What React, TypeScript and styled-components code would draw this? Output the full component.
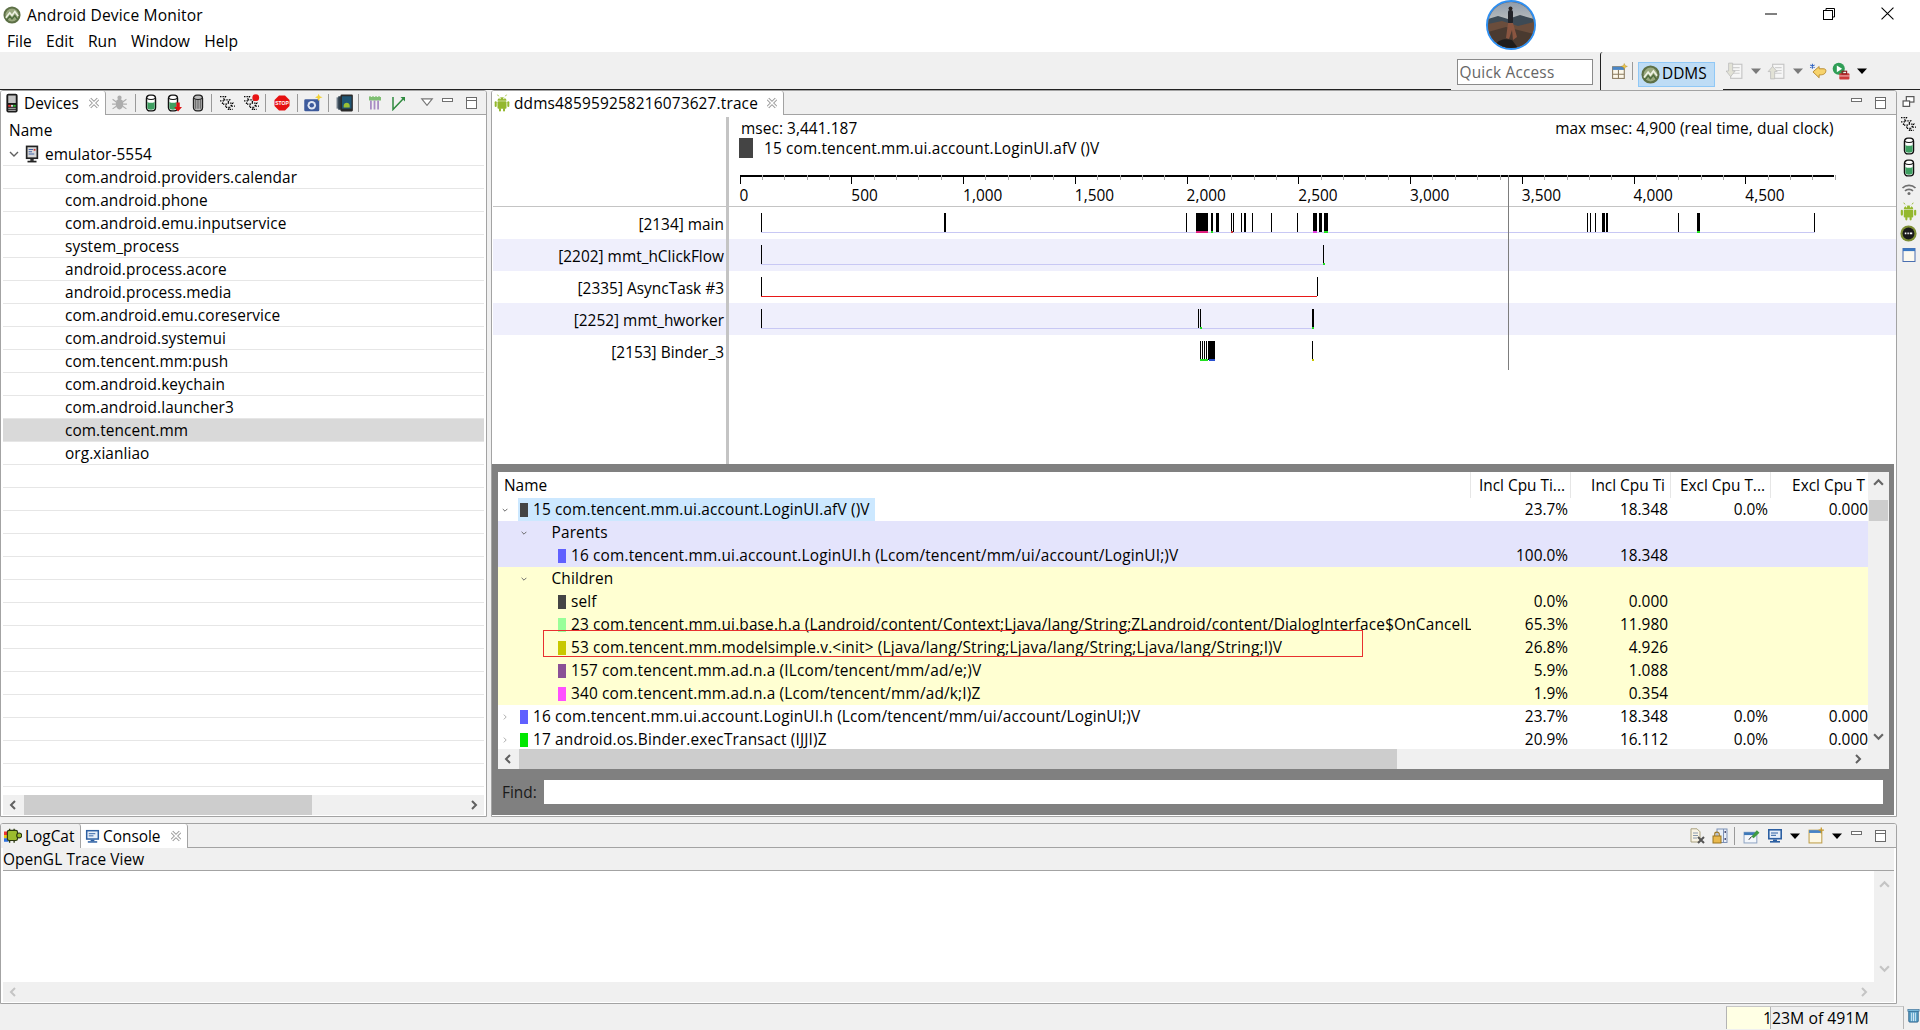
import React from "react";
import styled, { createGlobalStyle } from "styled-components";

const Global = createGlobalStyle`
  html, body { margin: 0; padding: 0; background: #f0f0f0; }
  #root { width: 1920px; height: 1030px; overflow: hidden; }
  * { box-sizing: border-box; }
`;

const FONT = `"Open Sans", "Noto Sans", "Liberation Sans", sans-serif`;
const BORDER = "#a3a3a3";

const Page = styled.div`
  width: 1920px; height: 1030px; display: flex; flex-direction: column;
  background: #f0f0f0; color: #000; font: 15.4px/23px ${FONT};
`;

/* ---- title bar ---- */
const TitleBar = styled.header`display: flex; height: 52px; background: #fff; flex: none;`;
const TitleLeft = styled.div`flex: 1; display: flex; flex-direction: column;`;
const TitleRow = styled.div`display: flex; align-items: center; height: 30px; padding-left: 3px; gap: 6px; font-size: 15.6px; letter-spacing: 0.15px;`;
const MenuBar = styled.nav`display: flex; gap: 14.3px; padding-left: 7px; font-size: 15.6px; height: 22px; line-height: 22px;`;
const MenuItem = styled.span``;
const Avatar = styled.div`width: 50px; height: 50px; border-radius: 50%; border: 2px solid #2f8ff0; overflow: hidden; flex: none; background: #445;`;
const WindowControls = styled.div`width: 384px; display: flex; justify-content: flex-end; padding: 0 3px 0 0; flex: none;`;
const WinButton = styled.div`width: 58.5px; height: 27px; display: flex; align-items: center; justify-content: center;`;

/* ---- toolbar ---- */
const Toolbar = styled.div`display: flex; height: 38px; flex: none;`;
const ToolbarFill = styled.div`flex: 1; border-bottom: 1px solid #222;`;
const QuickZone = styled.div`width: 149px; padding: 7px 0 0 5.5px;`;
const QuickBox = styled.div`width: 136px; height: 26px; border: 1px solid #8a8a8a; background: #fff; color: #666; padding-left: 2px; line-height: 25px; letter-spacing: 0.2px;`;
const PerspectiveZone = styled.div`width: 123px; border-left: 1px solid #222; border-top-left-radius: 3px; display: flex; align-items: center;`;
const TrailZone = styled.div`width: 197px; border-bottom: 1px solid #222; display: flex; align-items: center;`;
const DdmsButton = styled.div`
  width: 77px; height: 25px; margin: 6px 8px 0 0; background: #bedcf5; border: 1px solid #90c8f6;
  display: flex; align-items: center; padding-left: 2px; gap: 2px; flex: none; line-height: 24px;
`;

/* ---- generic strip ---- */
const StripRow = styled.div`display: flex; align-items: center; flex: 1; height: 100%;`;
const Tool = styled.div<{ $w: number; $ml: number }>`
  width: ${p => p.$w}px; margin-left: ${p => p.$ml}px; display: flex; align-items: center; justify-content: center; flex: none;
`;
const Sep = styled.div`width: 1px; height: 18px; background: #9a9a9a;`;

type Item = { c: number; w?: number; node: React.ReactNode };
const Strip = ({ origin, items }: { origin: number; items: Item[] }) => {
  let end = origin;
  return (
    <StripRow>
      {items.map((it, i) => {
        const w = it.w ?? 20;
        const ml = it.c - w / 2 - end;
        end = it.c + w / 2;
        return <Tool key={i} $w={w} $ml={ml}>{it.node}</Tool>;
      })}
    </StripRow>
  );
};

/* ---- workbench ---- */
const MainRow = styled.div`display: flex; height: 733px; flex: none; padding-bottom: 6px;`;
const Panel = styled.section`
  border: 1px solid ${BORDER}; border-top-left-radius: 3px; border-top-right-radius: 3px;
  background: #fff; display: flex; flex-direction: column; overflow: hidden; flex: none;
`;
const LeftPanel = styled(Panel)`width: 487px; margin-right: 4px;`;
const RightPanel = styled(Panel)`width: 1406px;`;
const TabStrip = styled.div`display: flex; height: 24px; background: #f0f0f0; border-bottom: 1px solid ${BORDER}; flex: none; align-items: stretch;`;
const Tab = styled.div<{ $w: number; $active?: boolean; $icon?: number; $gap?: number; $ls?: number }>`
  width: ${p => p.$w}px; flex: none; display: flex; align-items: center; margin-bottom: -1px;
  background: ${p => (p.$active ? "#fff" : "#f0f0f0")};
  border-right: 1px solid ${BORDER};
  border-top-right-radius: 3px;
  padding-left: ${p => p.$icon ?? 2}px; gap: ${p => p.$gap ?? 3}px; line-height: 23px; height: 24px;
  letter-spacing: ${p => p.$ls ?? 0}px;
`;
const TabClose = styled.span`margin-left: auto; margin-right: 5px; display: flex;`;

/* ---- device tree ---- */
const Tree = styled.div`flex: 1; padding: 0 2px; display: flex; flex-direction: column; overflow: hidden; letter-spacing: 0.08px;`;
const TreeHeader = styled.div`height: 28px; padding: 4px 0 0 6px; flex: none;`;
const TreeRow = styled.div<{ $sel?: boolean; $indent: number; $gap?: number }>`
  height: 23px; flex: none; border-bottom: 1px solid #e6e6e6; padding-left: ${p => p.$indent}px;
  background: ${p => (p.$sel ? "#d9d9d9" : "#fff")}; display: flex; align-items: center; gap: ${p => p.$gap ?? 0}px; white-space: nowrap;
`;
const Scroll = styled.div<{ $m?: string }>`
  height: 20px; background: #f0f0f0; flex: none; display: flex; align-items: center; justify-content: space-between;
  margin: ${p => p.$m ?? "0"}; position: relative;
`;
const Thumb = styled.div<{ $l: number; $w: number }>`
  position: absolute; top: 0; bottom: 0; left: ${p => p.$l}px; width: ${p => p.$w}px; background: #cdcdcd;
`;
const ScrollArrow = styled.span<{ $mr?: number }>`width: 20px; display: flex; align-items: center; justify-content: center; position: relative; margin-right: ${p => p.$mr ?? 0}px;`;

/* ---- trace view ---- */
const TracePane = styled.div`height: 349px; position: relative; flex: none; display: flex; flex-direction: column;`;
const TraceHead = styled.div`height: 92px; display: grid; grid-template-columns: 236px 1fr; border-bottom: 1px solid #c4c4c4; flex: none; margin-left: 1px;`;
const LabelCol = styled.div<{ $mt?: number }>`border-right: 3px solid #c4c4c4; margin-top: ${p => p.$mt ?? 0}px;`;
const HeadInfo = styled.div`display: flex; flex-direction: column; padding-top: 3px;`;
const MsecRow = styled.div`display: flex; justify-content: space-between; height: 20px; line-height: 22px; padding: 0 62.5px 0 12px; flex: none; letter-spacing: 0.07px;`;
const SelRow = styled.div`display: flex; align-items: flex-start; height: 20px; padding-left: 10px; gap: 11px; line-height: 22px; flex: none; letter-spacing: 0.13px;`;
const SelSwatch = styled.span`width: 14px; height: 20px; background: #444; flex: none;`;
const ThreadRow = styled.div<{ $alt?: boolean }>`
  height: 32px; display: grid; grid-template-columns: 236px 1165px; margin-left: 1px; flex: none;
  background: ${p => (p.$alt ? "#efeffc" : "#fff")};
`;
const ThreadLabel = styled.div`border-right: 3px solid #c4c4c4; text-align: right; padding-right: 2px; line-height: 35px; white-space: nowrap; letter-spacing: 0.02px;`;
const TraceFill = styled.div`flex: 1; margin-left: 1px; display: grid; grid-template-columns: 236px 1fr;`;
const Cursor = styled.div`position: absolute; left: 1016px; top: 60px; height: 195px; width: 1px; background: #7d7d7d;`;

/* ---- call table ---- */
const GrayFrame = styled.div`
  height: 351px; background: #808080; margin: 0 2px 0 0; padding: 8px 5px 0 6px; flex: none;
`;
const TableBox = styled.div`display: flex; height: 297px; background: #fff; position: relative;`;
const TableMain = styled.div`width: 1370px; display: flex; flex-direction: column; flex: none;`;
const cols = "973px 100px 100px 100px 97px";
const HeadRow = styled.div`display: grid; grid-template-columns: ${cols}; height: 26px; flex: none; line-height: 27px;`;
const HeadCell = styled.div<{ $left?: boolean }>`
  text-align: ${p => (p.$left ? "left" : "right")}; padding: ${p => (p.$left ? "0 0 0 6px" : "0 5px 0 0")};
  border-right: 1px solid #e6e6e6; white-space: nowrap; overflow: hidden; height: 26px;
  &:last-child { border-right: 0; padding-right: 3px; }
`;
const Body = styled.div`height: 251px; overflow: hidden; flex: none;`;
const Row = styled.div<{ $bg?: string }>`
  display: grid; grid-template-columns: ${cols}; height: 23px; background: ${p => p.$bg ?? "#fff"};
`;
const NameCell = styled.div<{ $pad: number }>`
  display: flex; align-items: center; padding-left: ${p => p.$pad}px; white-space: nowrap; overflow: hidden; height: 23px;
`;
const TreeArrow = styled.span`width: 14px; flex: none; display: flex; justify-content: center; margin-right: 6px;`;
const Label = styled.span<{ $sel?: boolean; $ml?: number }>`
  display: flex; align-items: center; height: 23px; padding: 0 5px 0 2px; margin-left: ${p => p.$ml ?? 0}px;
  background: ${p => (p.$sel ? "#cce8ff" : "transparent")}; flex: none; letter-spacing: 0.16px;
`;
const Swatch = styled.span<{ $c: string }>`width: 8px; height: 14px; background: ${p => p.$c}; margin-right: 5px; flex: none;`;
const Val = styled.div`text-align: right; padding-right: 3px; height: 23px; &:last-child { padding-right: 0; }`;
const VScroll = styled.div`width: 21px; background: #f0f0f0; position: relative; display: flex; flex-direction: column; align-items: center; flex: none;`;
const VThumb = styled.div`position: absolute; left: 1px; width: 19px; top: 28px; height: 21px; background: #cdcdcd;`;
const VArrow = styled.span<{ $top: number }>`position: absolute; top: ${p => p.$top}px; left: 5px; display: flex;`;
const Marker = styled.div`position: absolute; left: 45px; top: 158px; width: 820px; height: 27px; border: 1px solid #e83030; pointer-events: none;`;
const FindRow = styled.div`display: flex; align-items: center; height: 46px; gap: 6px;`;
const FindLabel = styled.span`color: #1a1a1a; width: 40px; padding-left: 4px; flex: none;`;
const FindInput = styled.div`width: 1339px; height: 24px; background: #fff; flex: none;`;

/* ---- right trim ---- */
const Trim = styled.aside`width: 23px; flex: none; display: flex; flex-direction: column; align-items: center; padding-top: 1px;`;
const TrimCell = styled.div`height: 21.9px; display: flex; align-items: center; justify-content: center;`;

/* ---- bottom ---- */
const BottomPanel = styled(Panel)`width: 1897px; height: 181px;`;
const InfoBar = styled.div`height: 23px; background: #f0f0f0; border-bottom: 1px solid ${BORDER}; margin: 0 2px; line-height: 24px; flex: none; letter-spacing: 0.1px;`;
const ConsoleBody = styled.div`flex: 1; display: flex; margin: 0 2px;`;
const ConsoleText = styled.div`flex: 1; background: #fff;`;
const ConsoleV = styled.div`width: 20px; background: #f0f0f0; display: flex; flex-direction: column; align-items: center; justify-content: space-between; padding: 8px 0;`;
const Status = styled.footer`flex: none; height: 26px; display: flex; justify-content: flex-end; padding-top: 2px;`;
const Heap = styled.div`width: 178px; height: 23px; border-left: 1px solid #b4b4b4; border-right: 1px solid #b4b4b4; border-top: 1px solid #c8c8c8; position: relative; margin-right: 2px;`;
const HeapFill = styled.div`position: absolute; left: 0; top: 0; bottom: 0; width: 44px; background: #ffffe4; border-right: 1px solid #b4b4b4;`;
const HeapText = styled.span`position: absolute; left: 36px; top: 0; line-height: 22px; font-size: 15.8px; white-space: nowrap;`;
const TrashCell = styled.div`width: 14px; display: flex; justify-content: center; padding-top: 2px;`;

/* ---- icons ---- */
const Svg: React.FC<{ s?: number; children: React.ReactNode; vb?: string }> = ({ s = 20, children, vb = "0 0 16 16" }) => (
  <svg width={s} height={s} viewBox={vb} style={{ display: "block", flex: "none" }}>{children}</svg>
);
const CloseX = () => (
  <Svg s={12} vb="0 0 12 12">
    <path d="M2 2L10 10M10 2L2 10" stroke="#9c9c9c" strokeWidth="3.2" fill="none" />
    <path d="M2 2L10 10M10 2L2 10" stroke="#fff" strokeWidth="1.5" fill="none" />
  </Svg>
);
const Phone = () => (
  <Svg>
    <rect x="3.5" y="0.5" width="9" height="15" rx="1.6" fill="#1c1c1c" />
    <rect x="5" y="2" width="6" height="6" fill="#c4c4c4" />
    <rect x="5" y="9.5" width="2" height="1.5" fill="#e33" /><rect x="7.2" y="9.5" width="1.6" height="1.5" fill="#ddd" /><rect x="9" y="9.5" width="2" height="1.5" fill="#3b3" />
    <rect x="5" y="11.8" width="6" height="1" fill="#999" /><rect x="5" y="13.4" width="6" height="1" fill="#999" />
  </Svg>
);
const Bug = () => (
  <Svg s={17}>
    <ellipse cx="8" cy="9.5" rx="3.6" ry="5" fill="#adadad" />
    <circle cx="8" cy="3.5" r="2" fill="#adadad" />
    <path d="M1.5 5L5 7.5M14.5 5L11 7.5M1 9.5H4.5M15 9.5H11.5M1.5 14L5 11.5M14.5 14L11 11.5" stroke="#adadad" strokeWidth="1.1" fill="none" />
  </Svg>
);
const Cylinder = ({ c = "#3f9f62", dark = "#111" }: { c?: string; dark?: string }) => (
  <>
    <rect x="4" y="1" width="8" height="14" rx="3" fill="#fff" stroke={dark} strokeWidth="1.3" />
    <path d="M4.8 7C6 8 10 8 11.2 7V12.4C11.2 14.4 4.8 14.4 4.8 12.4Z" fill={c} />
    <path d="M4.4 3.8C6 5.2 10 5.2 11.6 3.8" stroke={dark} strokeWidth="0.9" fill="none" />
  </>
);
const Cyl = () => <Svg s={18}><Cylinder /></Svg>;
const CylDown = () => (
  <Svg s={18}>
    <Cylinder />
    <path d="M11 7.5H14V11.5H16L12.5 15.5L9 11.5H11Z" fill="#dd1111" />
  </Svg>
);
const TrashCyl = () => (
  <Svg s={18}>
    <rect x="4" y="1" width="8" height="14" rx="3" fill="#bbb" stroke="#222" strokeWidth="1.2" />
    <path d="M6 5V13M8 5V13M10 5V13" stroke="#555" strokeWidth="0.9" />
    <path d="M4.4 3.8C6 5.2 10 5.2 11.6 3.8" stroke="#222" strokeWidth="0.9" fill="none" />
  </Svg>
);
const Threads = ({ ball }: { ball?: boolean }) => (
  <Svg s={17}>
    <path d="M1 2.5H6L4 5.5H10L8 8.5H13L11 11.5H15" stroke="#000" strokeWidth="1.2" strokeDasharray="1.3 1" fill="none" />
    <path d="M1 6.5H4L3 9.5H7L6 12.5H10L9 14.5H13" stroke="#000" strokeWidth="1.2" strokeDasharray="1.3 1" fill="none" />
    {ball && <circle cx="12" cy="3.5" r="3.2" fill="#e81515" />}
  </Svg>
);
const Stop = () => (
  <Svg s={16}>
    <path d="M5 0.5H11L15.5 5V11L11 15.5H5L0.5 11V5Z" fill="#e61111" />
    <text x="8" y="10" textAnchor="middle" fontSize="5" fontWeight="700" fontFamily="Liberation Sans" fill="#fff" letterSpacing="0">STOP</text>
  </Svg>
);
const Camera = () => (
  <Svg s={20}>
    <rect x="1" y="5" width="12" height="9.5" rx="1" fill="#3d5a9c" />
    <circle cx="7" cy="9.8" r="3.4" fill="#dfe6f3" /><circle cx="7" cy="9.8" r="1.8" fill="#3d5a9c" />
    <path d="M12.5 0.5L13.4 2.6L15.6 3.4L13.4 4.2L12.5 6.5L11.6 4.2L9.6 3.4L11.6 2.6Z" fill="#f2d135" />
  </Svg>
);
const Device = () => (
  <Svg s={18}>
    <rect x="0.5" y="3" width="5" height="10" fill="#6c7a86" /><rect x="2" y="2" width="5" height="12" fill="#2d3e4c" />
    <rect x="4" y="0.5" width="11" height="15" rx="1" fill="#2b2b2b" />
    <rect x="5.3" y="2" width="8.5" height="11" fill="#1f5574" />
    <path d="M6.8 10.5C6.8 7 12.2 7 12.2 10.5V12H6.8Z" fill="#9bc034" />
  </Svg>
);
const Palette = () => (
  <Svg s={16}>
    <rect x="2" y="2" width="12" height="3.5" fill="#7fbf73" />
    <path d="M3 1V5M6 1V5M9 1V5M12 1V5" stroke="#7fbf73" strokeWidth="1.2" />
    <rect x="3" y="5.5" width="1.8" height="9" fill="#a88cc4" /><rect x="6.6" y="5.5" width="1.8" height="9" fill="#a88cc4" /><rect x="10.2" y="5.5" width="1.8" height="9" fill="#a88cc4" />
  </Svg>
);
const LineTool = () => (
  <Svg s={16}>
    <path d="M3 2V14.5L13 4" stroke="#2f8a3f" strokeWidth="1.5" fill="none" />
    <path d="M10.5 2H15V6.5Z" fill="#2f8a3f" />
  </Svg>
);
const ViewMenu = () => (
  <Svg s={14} vb="0 0 12 12"><path d="M1.5 2.5H10.5L6 8Z" fill="#fff" stroke="#777" /></Svg>
);
const MinBtn = () => (
  <Svg s={14} vb="0 0 14 14"><rect x="1.5" y="2.5" width="10" height="3" fill="#fff" stroke="#707070" /></Svg>
);
const MaxBtn = () => (
  <Svg s={14} vb="0 0 14 14"><rect x="2.5" y="1.5" width="10" height="11" fill="#fff" stroke="#6a6a6a" /><path d="M2.5 4.5H12.5" stroke="#6a6a6a" /></Svg>
);
const Android = ({ s = 16 }: { s?: number }) => (
  <Svg s={s}>
    <path d="M4 6C4 1.8 12 1.8 12 6Z" fill="#94b82e" />
    <path d="M5 2L4 0.6M11 2L12 0.6" stroke="#94b82e" strokeWidth="0.8" />
    <rect x="4" y="6.5" width="8" height="6.5" rx="0.8" fill="#94b82e" />
    <rect x="1.5" y="6.5" width="1.8" height="5" rx="0.9" fill="#94b82e" /><rect x="12.7" y="6.5" width="1.8" height="5" rx="0.9" fill="#94b82e" />
    <rect x="5.3" y="12.5" width="1.8" height="3" rx="0.9" fill="#94b82e" /><rect x="8.9" y="12.5" width="1.8" height="3" rx="0.9" fill="#94b82e" />
    <circle cx="6.3" cy="4" r="0.6" fill="#fff" /><circle cx="9.7" cy="4" r="0.6" fill="#fff" />
  </Svg>
);
const Peak = ({ s = 20 }: { s?: number }) => (
  <Svg s={s}>
    <circle cx="8" cy="8" r="7.6" fill="#5d7046" />
    <circle cx="8" cy="8" r="5.8" fill="#9aa97f" />
    <path d="M2.5 10.5L6 6L8 8.5L10.5 5L13.5 9" stroke="#eef2e4" strokeWidth="1.4" fill="none" />
    <path d="M3 13L6 9L8 11.5L10.5 8.5L13 12" stroke="#4d6b3c" strokeWidth="1.2" fill="none" />
  </Svg>
);
const OpenPersp = () => (
  <Svg s={17}>
    <rect x="1.5" y="3.5" width="11" height="11" fill="#fdf8ea" stroke="#8a7b60" />
    <rect x="1.5" y="3.5" width="11" height="3" fill="#4a86c6" />
    <path d="M7 6.5V14.5M1.5 10.5H12.5" stroke="#8a7b60" />
    <path d="M12.5 0.5L13.3 2.4L15.4 3.2L13.3 4L12.5 6L11.7 4L9.6 3.2L11.7 2.4Z" fill="#f0c84a" stroke="#a8862a" strokeWidth="0.4" />
  </Svg>
);
const DocArrow = ({ up }: { up?: boolean }) => (
  <Svg s={18}>
    <rect x="5" y="2" width="10" height="12.5" fill="#f6f6f6" stroke="#c4c4c4" />
    <path d="M7 5H13M7 7.5H13M7 10H13" stroke="#d0d0d0" />
    <path d={up ? "M5 4L9 8.5H6.8V15H3.2V8.5H1Z" : "M3.2 1H6.8V8H9L5 13L1 8H3.2Z"} fill="#e2e2d6" stroke="#bbb" strokeWidth="0.7" />
  </Svg>
);
const DropGray = () => <Svg s={12} vb="0 0 12 12"><path d="M1 3.5H11L6 9Z" fill="#7a7a7a" /></Svg>;
const DropBlack = () => <Svg s={12} vb="0 0 12 12"><path d="M1 3.5H11L6 9Z" fill="#000" /></Svg>;
const StarArrow = () => (
  <Svg s={18}>
    <path d="M15 7.5C15 11 12 11.5 9 11.5V14L3.5 8.8L9 4V6H12.5C14 6 15 6.5 15 7.5Z" fill="#f7d36c" stroke="#b4862a" strokeWidth="0.8" />
    <path d="M3 1.5V6M1 2.5L5 5M5 2.5L1 5" stroke="#2a5fc0" strokeWidth="0.9" />
  </Svg>
);
const RunTool = () => (
  <Svg s={18}>
    <circle cx="6" cy="6" r="5.4" fill="#2f9e56" /><path d="M4.3 3L9 6L4.3 9Z" fill="#fff" />
    <rect x="6.5" y="10" width="9" height="5.5" rx="0.8" fill="#cc3a3a" />
    <rect x="9" y="8.2" width="4" height="2.4" fill="none" stroke="#8a1f1f" /><path d="M6.5 12.4H15.5" stroke="#fff" strokeWidth="0.6" />
  </Svg>
);
const DocClear = () => (
  <Svg s={16}>
    <path d="M2 0.8H8L11 3.8V14H2Z" fill="#f9f4e5" stroke="#a8a07e" />
    <path d="M4 5H9M4 7.5H9M4 10H8" stroke="#8a9aae" />
    <path d="M9 9L15 15M15 9L9 15" stroke="#555" strokeWidth="2" />
  </Svg>
);
const ScrollLock = () => (
  <Svg s={16}>
    <rect x="5" y="1" width="10" height="13.5" fill="#e9eef7" stroke="#7d91b6" />
    <path d="M11.5 1V14.5" stroke="#7d91b6" /><rect x="12.5" y="3" width="1.5" height="2" fill="#557" /><rect x="12.5" y="10" width="1.5" height="2" fill="#557" />
    <rect x="1" y="8" width="8" height="7" fill="#e9b94e" stroke="#9a7420" />
    <path d="M2.8 8V6C2.8 3.6 7.2 3.6 7.2 6V8" fill="none" stroke="#9a7420" strokeWidth="1.2" />
  </Svg>
);
const Pin = () => (
  <Svg s={17}>
    <rect x="1" y="5" width="12" height="10" fill="#f4f7fb" stroke="#93a8c6" /><rect x="1" y="5" width="12" height="2.6" fill="#3d78b8" />
    <path d="M8 9L13 3L15.5 5.5L10 10.5Z" fill="#3f9b42" /><path d="M8 9L5.5 12" stroke="#222" strokeWidth="0.9" />
  </Svg>
);
const Monitor = ({ s = 15 }: { s?: number }) => (
  <Svg s={s}>
    <rect x="1" y="1" width="14" height="10.5" fill="#2c5fa2" /><rect x="2.6" y="2.6" width="10.8" height="7.3" fill="#e7eff9" />
    <path d="M4 5H11M4 7.3H9" stroke="#2c5fa2" />
    <rect x="6" y="11.5" width="4" height="1.5" fill="#2c5fa2" /><rect x="3" y="13" width="10" height="1.6" fill="#2c5fa2" />
  </Svg>
);
const NewWin = () => (
  <Svg s={17}>
    <rect x="1" y="3" width="12" height="12" fill="#fdf8e4" stroke="#bf9f4c" /><rect x="1" y="3" width="12" height="2.6" fill="#4a86c6" />
    <path d="M12.5 0.5V6M10 3H15" stroke="#c79a2c" strokeWidth="1.2" />
  </Svg>
);
const LogCat = () => (
  <Svg s={18}>
    <path d="M0 4H4V7H0Z" fill="#e33" /><path d="M0 7H4V10H0Z" fill="#e8c81a" /><path d="M0 10H4V13H0Z" fill="#2a6fe0" />
    <rect x="3" y="3" width="9" height="9" rx="1.5" fill="#9cbc2e" stroke="#2d3a10" /><circle cx="13.5" cy="7.5" r="2.2" fill="#9cbc2e" stroke="#2d3a10" />
    <path d="M5 3V1.6M9 3V1.6M5 12V14M9 12V14" stroke="#2d3a10" strokeWidth="1.2" />
  </Svg>
);
const RestoreMini = () => (
  <Svg s={13} vb="0 0 12 12">
    <rect x="4" y="1.5" width="7" height="5" fill="#fff" stroke="#555" strokeWidth="1.1" />
    <rect x="1" y="5.5" width="6" height="5" fill="#fff" stroke="#555" strokeWidth="1.1" />
  </Svg>
);
const Wifi = () => (
  <Svg s={16}>
    <path d="M1.5 6C5 2.5 11 2.5 14.5 6M4 8.8C6.2 6.8 9.8 6.8 12 8.8" stroke="#6f6f6f" strokeWidth="1.7" fill="none" />
    <circle cx="8" cy="11.5" r="1.5" fill="#6f6f6f" />
  </Svg>
);
const RoundBlack = () => (
  <Svg s={17}>
    <circle cx="8" cy="8" r="7.6" fill="#7e8f35" /><circle cx="8" cy="8" r="5.6" fill="#1a1a1a" />
    <path d="M4.5 7.8H6M7 7.8H8.3M9.2 7.8H11.5" stroke="#fff" strokeWidth="1.6" />
  </Svg>
);
const BlueWin = () => (
  <Svg s={16}>
    <rect x="2" y="1.5" width="12" height="13" fill="#fdfaf0" stroke="#4a6fb0" /><rect x="2" y="1.5" width="12" height="2.6" fill="#3a78c2" />
  </Svg>
);
const TrashBlue = () => (
  <Svg s={15}>
    <rect x="3" y="3" width="10" height="12" rx="1" fill="#5da3c9" stroke="#28608a" />
    <path d="M6 5V14M8 5V14M10 5V14" stroke="#d7ecf7" />
    <rect x="2" y="1.6" width="12" height="2" fill="#79b8da" stroke="#28608a" strokeWidth="0.6" />
  </Svg>
);
const Chev = ({ d, c = "#606060", s = 10, w = 2 }: { d: "l" | "r" | "u" | "d"; c?: string; s?: number; w?: number }) => {
  const p = { l: "M7 1L3 5L7 9", r: "M3 1L7 5L3 9", u: "M1 7L5 3L9 7", d: "M1 3L5 7L9 3" }[d];
  return <Svg s={s} vb="0 0 10 10"><path d={p} stroke={c} strokeWidth={w} fill="none" /></Svg>;
};
const EmuIcon = () => (
  <Svg s={18}>
    <rect x="2.5" y="0.5" width="11" height="12" fill="#222" /><rect x="4" y="2" width="8" height="9" fill="#d8d8d8" />
    <path d="M5 4H9M5 6H8M5 8H10" stroke="#4466aa" /><rect x="9.5" y="3.5" width="1.6" height="1.6" fill="#c33" />
    <rect x="6.5" y="12.5" width="3" height="1.6" fill="#222" /><rect x="4" y="14" width="8" height="1.5" fill="#222" />
  </Svg>
);
const AvatarPic = () => (
  <svg width="46" height="46" viewBox="0 0 46 46" style={{ display: "block" }}>
    <defs>
      <linearGradient id="sky" x1="0" y1="0" x2="0" y2="1">
        <stop offset="0" stopColor="#8f9cab" /><stop offset="0.4" stopColor="#b9bcbd" /><stop offset="1" stopColor="#b9bcbd" />
      </linearGradient>
    </defs>
    <rect width="46" height="46" fill="url(#sky)" />
    <path d="M0 17L10 14L20 17L32 13L46 17V46H0Z" fill="#3d4a55" />
    <path d="M0 22L14 19L30 24L46 20V46H0Z" fill="#6a4d3c" />
    <path d="M0 30L18 25L46 32V46H0Z" fill="#4a3a30" />
    <path d="M6 46C8 38 16 36 24 38L30 46Z" fill="#1f1d1c" />
    <rect x="20" y="8" width="5" height="14" rx="2" fill="#22242a" /><circle cx="22.5" cy="6.5" r="2" fill="#2a2320" />
    <path d="M20 21L25 21L29 35L25 38L24 28L21 37L18 36Z" fill="#8a5540" />
  </svg>
);

/* ---- thread chart ---- */
const X0 = 729; // screen x of the chart's left edge
const z = (p: number) => 1120 + p / 1.96;
type Tick = [number, number, string?];
const ThreadBars = ({ start, end, line, ticks }: { start?: number; end?: number; line?: string; ticks: Tick[] }) => (
  <svg width="1165" height="32" style={{ display: "block" }} shapeRendering="crispEdges">
    {line && start !== undefined && end !== undefined && (
      <rect x={start - X0} y="25" width={end - start} height="1" fill={line} />
    )}
    {ticks.map(([a, b, col], i) => (
      <g key={i}>
        <rect x={a - X0} y="6" width={Math.max(1, b - a)} height="19" fill="#000" />
        {col && <rect x={a - X0} y="24" width={Math.max(2, b - a)} height="2" fill={col} />}
      </g>
    ))}
  </svg>
);
const zt = (a: number, b: number, c?: string): Tick => [z(a), z(b), c];
const mainTicks: Tick[] = [
  [761, 762], [944, 946],
  zt(130, 132), zt(149, 172, "#e0207f"), zt(178, 183, "#20e020"), zt(188, 195), zt(217, 219, "#c33"), zt(222, 224), zt(238, 240),
  zt(243, 246), zt(259, 260), zt(295, 297), zt(347, 348), zt(378, 387, "#e040e0"), zt(391, 396), zt(400, 407, "#20e020"),
  zt(916, 917), zt(921, 922), zt(931, 932), zt(945, 950), zt(953, 956), zt(1093, 1095), zt(1131, 1136, "#20e020"), zt(1360, 1363),
];
const threads = [
  { label: "[2134] main", alt: false, line: "#c8c8f4", start: 761, end: z(1362), ticks: mainTicks },
  { label: "[2202] mmt_hClickFlow", alt: true, line: "#c8c8f4", start: 761, end: z(399), ticks: [[761, 762], zt(398.5, 400, "#20e020")] as Tick[] },
  { label: "[2335] AsyncTask #3", alt: false, line: "#e81818", start: 761, end: z(387), ticks: [[761, 762], zt(386, 387.5)] as Tick[] },
  { label: "[2252] mmt_hworker", alt: true, line: "#c8c8f4", start: 761, end: z(380), ticks: [[761, 762], zt(153.5, 155), zt(157.5, 159, "#20e020"), zt(377, 380, "#20e020")] as Tick[] },
  { label: "[2153] Binder_3", alt: false, ticks: [zt(157, 159, "#20e020"), zt(161, 163, "#20e020"), zt(165, 167, "#20e020"), zt(169, 171, "#20e020"), zt(172, 174), zt(175, 186, "#2a50d0"), zt(376.5, 378, "#c8c800")] as Tick[] },
];
const TICK0 = 739.6, PER100 = 22.35;
const Ruler = () => (
  <svg width="1165" height="37" style={{ display: "block", marginTop: "11px", fontFamily: FONT, fontSize: "15.4px" }} shapeRendering="crispEdges">
    <rect x={TICK0 - X0} y="6" width="1094.5" height="1.5" fill="#000" />
    {Array.from({ length: 50 }, (_, i) => {
      const x = Math.round(TICK0 - X0 + i * PER100);
      const major = i % 5 === 0;
      return <rect key={i} x={x} y="6" width={major ? 1.3 : 1} height={major ? 9 : 5} fill={major ? "#000" : "#a8a8a8"} />;
    })}
    {[0, 500, 1000, 1500, 2000, 2500, 3000, 3500, 4000, 4500].map((v, i) => (
      <text key={v} x={TICK0 - X0 + i * 5 * PER100} y="32" fill="#000" style={{ shapeRendering: "auto" }}>{v.toLocaleString("en-US")}</text>
    ))}
  </svg>
);

/* ---- data ---- */
const procs = ["com.android.providers.calendar", "com.android.phone", "com.android.emu.inputservice", "system_process", "android.process.acore", "android.process.media", "com.android.emu.coreservice", "com.android.systemui", "com.tencent.mm:push", "com.android.keychain", "com.android.launcher3", "com.tencent.mm", "org.xianliao"];

const PURPLE = "#e4e4fc", YELLOW = "#ffffd2";
type R = { bg?: string; pad: number; arrow?: "d" | "r"; sw?: string; text: string; v?: string[]; ml?: number; sel?: boolean };
const rows: R[] = [
  { pad: 0, arrow: "d", sw: "#444444", text: "15 com.tencent.mm.ui.account.LoginUI.afV ()V", v: ["23.7%", "18.348", "0.0%", "0.000"], sel: true },
  { bg: PURPLE, pad: 19, arrow: "d", text: "Parents", ml: 12.5 },
  { bg: PURPLE, pad: 58, sw: "#6060ff", text: "16 com.tencent.mm.ui.account.LoginUI.h (Lcom/tencent/mm/ui/account/LoginUI;)V", v: ["100.0%", "18.348"] },
  { bg: YELLOW, pad: 19, arrow: "d", text: "Children", ml: 12.5 },
  { bg: YELLOW, pad: 58, sw: "#444444", text: "self", v: ["0.0%", "0.000"] },
  { bg: YELLOW, pad: 58, sw: "#99ff99", text: "23 com.tencent.mm.ui.base.h.a (Landroid/content/Context;Ljava/lang/String;ZLandroid/content/DialogInterface$OnCancelListener;)V", v: ["65.3%", "11.980"] },
  { bg: YELLOW, pad: 58, sw: "#c8c800", text: "53 com.tencent.mm.modelsimple.v.<init> (Ljava/lang/String;Ljava/lang/String;Ljava/lang/String;I)V", v: ["26.8%", "4.926"] },
  { bg: YELLOW, pad: 58, sw: "#8a5096", text: "157 com.tencent.mm.ad.n.a (ILcom/tencent/mm/ad/e;)V", v: ["5.9%", "1.088"] },
  { bg: YELLOW, pad: 58, sw: "#ff50ff", text: "340 com.tencent.mm.ad.n.a (Lcom/tencent/mm/ad/k;I)Z", v: ["1.9%", "0.354"] },
  { pad: 0, arrow: "r", sw: "#6060ff", text: "16 com.tencent.mm.ui.account.LoginUI.h (Lcom/tencent/mm/ui/account/LoginUI;)V", v: ["23.7%", "18.348", "0.0%", "0.000"] },
  { pad: 0, arrow: "r", sw: "#00e800", text: "17 android.os.Binder.execTransact (IJJI)Z", v: ["20.9%", "16.112", "0.0%", "0.000"] },
];

export default function App() {
  return (
    <Page>
      <Global />
      <TitleBar>
        <TitleLeft>
          <TitleRow><Peak s={18} />Android Device Monitor</TitleRow>
          <MenuBar>{["File", "Edit", "Run", "Window", "Help"].map(m => <MenuItem key={m}>{m}</MenuItem>)}</MenuBar>
        </TitleLeft>
        <Avatar><AvatarPic /></Avatar>
        <WindowControls>
          <WinButton><Svg s={12} vb="0 0 12 12"><path d="M0 6H12" stroke="#000" /></Svg></WinButton>
          <WinButton><Svg s={12} vb="0 0 12 12"><rect x="0.5" y="2.5" width="9" height="9" fill="#fff" stroke="#000" /><path d="M3 2.5V0.5H11.5V9H9.5" fill="none" stroke="#000" /></Svg></WinButton>
          <WinButton><Svg s={13} vb="0 0 12 12"><path d="M0.5 0.5L11.5 11.5M11.5 0.5L0.5 11.5" stroke="#000" /></Svg></WinButton>
        </WindowControls>
      </TitleBar>

      <Toolbar>
        <ToolbarFill />
        <QuickZone><QuickBox>Quick Access</QuickBox></QuickZone>
        <PerspectiveZone>
          <Strip origin={1601} items={[
            { c: 1619, node: <OpenPersp /> },
            { c: 1632, w: 1, node: <Sep /> },
          ]} />
          <DdmsButton><Peak s={19} />DDMS</DdmsButton>
        </PerspectiveZone>
        <TrailZone>
          <Strip origin={1723} items={[
            { c: 1734, w: 22, node: <DocArrow /> },
            { c: 1755.5, w: 12, node: <DropGray /> },
            { c: 1776, w: 22, node: <DocArrow up /> },
            { c: 1797.6, w: 12, node: <DropGray /> },
            { c: 1818, node: <StarArrow /> },
            { c: 1841, node: <RunTool /> },
            { c: 1862, w: 12, node: <DropBlack /> },
          ]} />
        </TrailZone>
      </Toolbar>

      <MainRow>
        <LeftPanel>
          <TabStrip>
            <Tab $w={105} $active $icon={1} $gap={2}>
              <Phone />Devices<TabClose><CloseX /></TabClose>
            </Tab>
            <Strip origin={105} items={[
              { c: 118, node: <Bug /> },
              { c: 134, w: 1, node: <Sep /> },
              { c: 150, node: <Cyl /> },
              { c: 172, node: <CylDown /> },
              { c: 196.5, node: <TrashCyl /> },
              { c: 210, w: 1, node: <Sep /> },
              { c: 226, node: <Threads /> },
              { c: 250, node: <Threads ball /> },
              { c: 264, w: 1, node: <Sep /> },
              { c: 281, node: <Stop /> },
              { c: 296, w: 1, node: <Sep /> },
              { c: 312, w: 22, node: <Camera /> },
              { c: 327, w: 1, node: <Sep /> },
              { c: 344, w: 22, node: <Device /> },
              { c: 357, w: 1, node: <Sep /> },
              { c: 374, node: <Palette /> },
              { c: 397, node: <LineTool /> },
              { c: 426, w: 14, node: <ViewMenu /> },
              { c: 447, w: 14, node: <MinBtn /> },
              { c: 470, w: 14, node: <MaxBtn /> },
            ]} />
          </TabStrip>
          <Tree>
            <TreeHeader>Name</TreeHeader>
            <TreeRow $indent={6} $gap={4}><Chev d="d" s={10} w={1.4} /><EmuIcon />emulator-5554</TreeRow>
            {procs.map(p => <TreeRow key={p} $indent={62} $sel={p === "com.tencent.mm"}>{p}</TreeRow>)}
            {Array.from({ length: 14 }, (_, i) => <TreeRow key={i} $indent={0} />)}
            <Scroll $m="auto 0 1px">
              <ScrollArrow><Chev d="l" /></ScrollArrow>
              <Thumb $l={21} $w={288} />
              <ScrollArrow><Chev d="r" /></ScrollArrow>
            </Scroll>
          </Tree>
        </LeftPanel>

        <RightPanel>
          <TabStrip>
            <Tab $w={292} $active $icon={1} $ls={0.17}>
              <Android s={18} />ddms485959258216073627.trace<TabClose><CloseX /></TabClose>
            </Tab>
            <Strip origin={784} items={[
              { c: 1857, w: 14, node: <MinBtn /> },
              { c: 1880, w: 14, node: <MaxBtn /> },
            ]} />
          </TabStrip>
          <TracePane>
            <TraceHead>
              <LabelCol $mt={2} />
              <HeadInfo>
                <MsecRow><span>msec: 3,441.187</span><span>max msec: 4,900 (real time, dual clock)</span></MsecRow>
                <SelRow><SelSwatch />15 com.tencent.mm.ui.account.LoginUI.afV ()V</SelRow>
                <Ruler />
              </HeadInfo>
            </TraceHead>
            {threads.map(t => (
              <ThreadRow key={t.label} $alt={t.alt}>
                <ThreadLabel>{t.label}</ThreadLabel>
                <ThreadBars start={t.start} end={t.end} line={t.line} ticks={t.ticks} />
              </ThreadRow>
            ))}
            <TraceFill><LabelCol /></TraceFill>
            <Cursor />
          </TracePane>
          <GrayFrame>
            <TableBox>
              <TableMain>
                <HeadRow>
                  <HeadCell $left>Name</HeadCell>
                  <HeadCell>Incl Cpu Ti...</HeadCell>
                  <HeadCell>Incl Cpu Ti</HeadCell>
                  <HeadCell>Excl Cpu T...</HeadCell>
                  <HeadCell>Excl Cpu T</HeadCell>
                </HeadRow>
                <Body>
                  {rows.map((r, i) => (
                    <Row key={i} $bg={r.bg}>
                      <NameCell $pad={r.pad}>
                        {r.arrow && <TreeArrow><Chev d={r.arrow} s={6} c={r.arrow === "r" ? "#aaa" : "#666"} w={1.6} /></TreeArrow>}
                        <Label $sel={r.sel} $ml={r.ml}>
                          {r.sw && <Swatch $c={r.sw} />}
                          {r.text}
                        </Label>
                      </NameCell>
                      {[0, 1, 2, 3].map(k => <Val key={k}>{r.v?.[k] ?? ""}</Val>)}
                    </Row>
                  ))}
                </Body>
                <Scroll>
                  <ScrollArrow><Chev d="l" /></ScrollArrow>
                  <Thumb $l={21} $w={878} />
                  <ScrollArrow><Chev d="r" /></ScrollArrow>
                </Scroll>
              </TableMain>
              <VScroll>
                <VArrow $top={5}><Chev d="u" c="#666" s={11} /></VArrow>
                <VThumb />
                <VArrow $top={259}><Chev d="d" c="#666" s={11} /></VArrow>
              </VScroll>
              <Marker />
            </TableBox>
            <FindRow>
              <FindLabel>Find:</FindLabel>
              <FindInput />
            </FindRow>
          </GrayFrame>
        </RightPanel>

        <Trim>
          {[<RestoreMini />, <Threads />, <Cyl />, <Cyl />, <Wifi />, <Android s={19} />, <RoundBlack />, <BlueWin />].map((n, i) => (
            <TrimCell key={i}>{n}</TrimCell>
          ))}
        </Trim>
      </MainRow>

      <BottomPanel>
        <TabStrip>
          <Tab $w={80} $icon={3}><LogCat />LogCat</Tab>
          <Tab $w={107} $active $icon={4}><Monitor />Console<TabClose><CloseX /></TabClose></Tab>
          <Strip origin={188} items={[
            { c: 1697, node: <DocClear /> },
            { c: 1720, node: <ScrollLock /> },
            { c: 1734, w: 1, node: <Sep /> },
            { c: 1751, w: 22, node: <Pin /> },
            { c: 1775, w: 18, node: <Monitor s={16} /> },
            { c: 1795, w: 12, node: <DropBlack /> },
            { c: 1816, w: 21, node: <NewWin /> },
            { c: 1837, w: 12, node: <DropBlack /> },
            { c: 1857, w: 14, node: <MinBtn /> },
            { c: 1880, w: 14, node: <MaxBtn /> },
          ]} />
        </TabStrip>
        <InfoBar>OpenGL Trace View</InfoBar>
        <ConsoleBody>
          <ConsoleText />
          <ConsoleV><Chev d="u" c="#c4c4c4" s={11} /><Chev d="d" c="#c4c4c4" s={11} /></ConsoleV>
        </ConsoleBody>
        <Scroll $m="0 2px 1px">
          <ScrollArrow><Chev d="l" c="#c4c4c4" /></ScrollArrow>
          <ScrollArrow $mr={20}><Chev d="r" c="#c4c4c4" /></ScrollArrow>
        </Scroll>
      </BottomPanel>

      <Status>
        <Heap><HeapFill /><HeapText>123M of 491M</HeapText></Heap>
        <TrashCell><TrashBlue /></TrashCell>
      </Status>
    </Page>
  );
}
